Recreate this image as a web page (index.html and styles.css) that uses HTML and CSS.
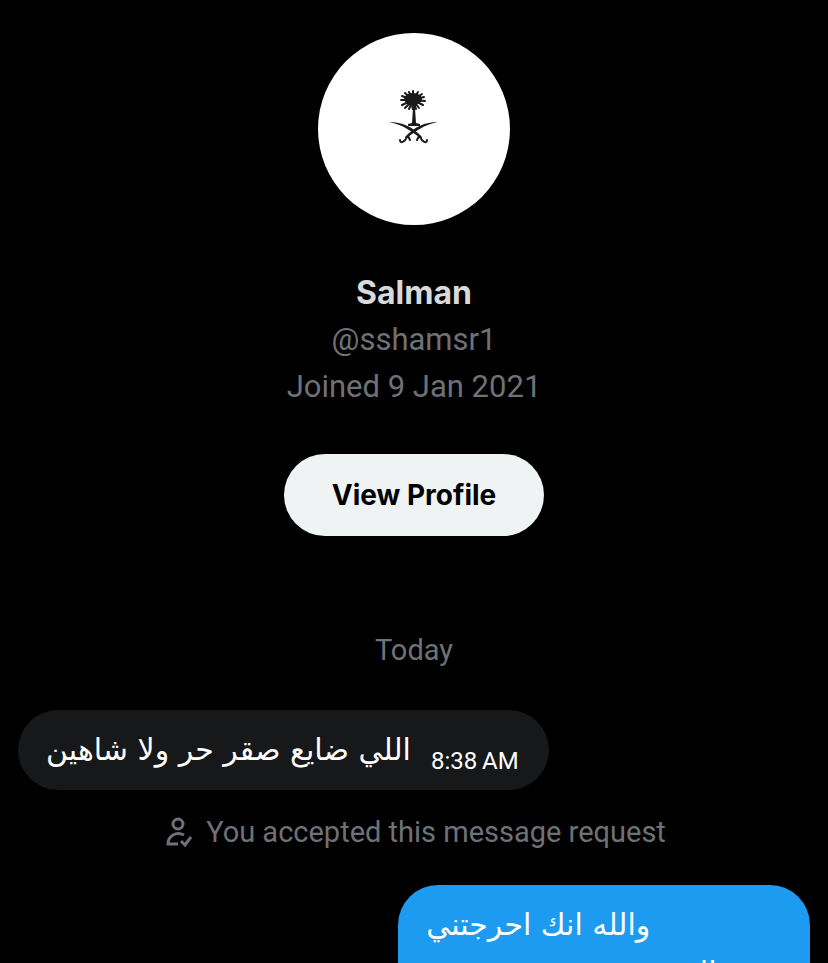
FILE: index.html
```html
<!DOCTYPE html>
<html lang="en">

<head>
    <meta charset="UTF-8">
    <meta name="viewport" content="width=device-width, initial-scale=1.0">
    <title>Messages</title>
    <link rel="stylesheet" href="styles.css">
</head>

<body>

    <header class="profile">
        <div class="avatar">
            <svg class="emblem" viewBox="0 0 70 75" role="img" aria-label="Palm tree above two crossed swords">
                <!-- Palm leaves -->
                <g fill="none" stroke="#1a1a1a" stroke-width="2" stroke-linecap="round">
                    <path d="M34 20L23 25M34 20L22 20M34 20L23 16M34 20L26 13M34 20L30 12M34 20L34 11M34 20L39 12M34 20L43 14M34 20L45 17M34 20L46 21M34 20L44 25M34 20L40 28M34 20L37 29M34 20L30 29M34 20L26 28" />
                </g>
                <ellipse cx="34" cy="19" rx="9" ry="6" fill="#1a1a1a" />
                <path d="M31 20h7l-2 10h-3z" fill="#1a1a1a" />
                <!-- Trunk and base -->
                <path d="M34 28h2l1 15 4 1v2H29v-2l4-1z" fill="#1a1a1a" />
                <!-- Swords -->
                <g fill="#1a1a1a">
                    <path d="M10 42C23 42 34 47 43 57L42 59C33 51 24 45 10 42Z" />
                    <path d="M59 42C46 42 35 47 26 57L27 59C36 51 45 45 59 42Z" />
                </g>
                <!-- Hilts -->
                <g fill="none" stroke="#1a1a1a" stroke-width="2" stroke-linecap="round">
                    <path d="M29 56l2 4M28 57c-2 5-7 7-7 3M40 56l-2 4M41 57c2 5 7 7 7 3" />
                </g>
            </svg>
        </div>
        <h1 class="name">Salman</h1>
        <p class="detail">@sshamsr1</p>
        <p class="detail">Joined 9 Jan 2021</p>
        <button class="view-profile" type="button">View Profile</button>
    </header>

    <main class="chat">
        <p class="day">Today</p>

        <div class="bubble received">
            <span class="text" lang="ar" dir="rtl">اللي ضايع صقر حر ولا شاهين</span>
            <time class="time" datetime="08:38">8:38&#8201;AM</time>
        </div>

        <p class="notice">
            <svg class="notice-icon" viewBox="0 0 26 30" aria-hidden="true">
                <g fill="none" stroke="#6e7277" stroke-width="3">
                    <circle cx="12" cy="7" r="5" />
                    <path d="M18 18C10 14 2 19 2 27H12" />
                    <path d="M15 24l4 4 6-8" />
                </g>
            </svg>
            You accepted this message request
        </p>

        <div class="bubble sent">
            <span class="text" lang="ar" dir="rtl">والله انك احرجتني</span>
            <span class="text" lang="ar" dir="rtl">القصة غريبة وهدية حرة</span>
        </div>
    </main>

</body>

</html>
```

FILE: styles.css
```css
body {
    margin: 0;
    background-color: #000;
    color: #6e7277;
    font-family: Roboto, "DejaVu Sans", sans-serif;
    font-size: 29px;
    line-height: 36px;
    overflow: hidden;
}

p {
    margin: 0;
}

.profile {
    display: flex;
    flex-direction: column;
    align-items: center;
    padding-top: 33px;
}

.avatar {
    display: flex;
    justify-content: center;
    width: 192px;
    height: 192px;
    margin-bottom: 44px;
    border-radius: 50%;
    background-color: #fff;
}

.emblem {
    width: 70px;
    height: 75px;
    margin-top: 47px;
}

.name {
    margin: 0;
    color: #d9d9d9;
    font-family: Inter, sans-serif;
    font-size: 32px;
    font-weight: 700;
    line-height: 47px;
}

.detail {
    font-size: 31px;
    line-height: 47px;
}

.view-profile {
    margin-top: 44px;
    padding: 22px 48px;
    border: none;
    border-radius: 41px;
    background-color: #eff3f4;
    color: #000;
    font-family: Inter, sans-serif;
    font-size: 28px;
    font-weight: 700;
    line-height: 38px;
    cursor: pointer;
}

.chat {
    display: flex;
    flex-direction: column;
    padding: 96px 18px 0;
}

.day {
    text-align: center;
}

.bubble {
    box-sizing: border-box;
    border-radius: 40px;
    padding: 16px 28px;
    color: #fff;
}

.received {
    display: flex;
    align-items: flex-end;
    align-self: flex-start;
    gap: 20px;
    margin-top: 42px;
    padding-right: 30px;
    background-color: #16181a;
}

.text {
    font-family: "DejaVu Sans", sans-serif;
    font-size: 30px;
    line-height: 48px;
    white-space: nowrap;
}

.time {
    font-size: 24px;
    line-height: 26px;
    white-space: nowrap;
}

.notice {
    display: flex;
    align-items: center;
    justify-content: center;
    gap: 14px;
    margin-top: 24px;
    padding-left: 4px;
}

.notice-icon {
    width: 26px;
    height: 30px;
}

.sent {
    display: flex;
    flex-direction: column;
    align-items: flex-start;
    align-self: flex-end;
    width: 52%;
    margin-top: 35px;
    background-color: #1d9bf0;
}
```
